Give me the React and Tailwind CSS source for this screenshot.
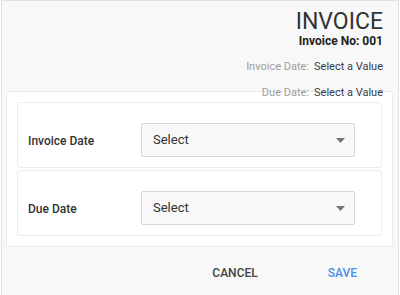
import React from "react";

function Arrow() {
  return (
    <svg width="9" height="5" viewBox="0 0 9 5" className="block">
      <polygon points="0,0 9,0 4.5,5" fill="#757575" />
    </svg>
  );
}

function Row({ label }) {
  return (
    <div className="flex items-start h-[66px] border border-[#ececec] rounded-[3px] bg-white pt-[20px] pl-[10px]">
      <div className="w-[113px] h-[34px] pt-[2px] flex items-center text-[12px] font-medium text-[#333333] leading-[14px]">
        {label}
      </div>
      <div className="w-[214px] h-[34px] flex items-center justify-between border border-[#d6d6d6] rounded-[2px] bg-[#f8f8f8] pl-[11px] pr-[9px]">
        <span className="text-[13px] text-[#333333] leading-[16px]">Select</span>
        <Arrow />
      </div>
    </div>
  );
}

export default function App() {
  return (
    <div className="w-[400px] h-[295px] bg-white overflow-hidden" style={{ fontFamily: "Roboto, 'Liberation Sans', sans-serif" }}>
      <div className="ml-[1px] w-[398px] h-[295px] bg-[#f8f8f8] border-x border-t border-[#e2e2e2] flex flex-col">
        <div className="relative z-10 flex flex-col items-end pt-[8px] pr-[15px]">
          <div className="text-[23px] leading-[25px] text-[#333333]">INVOICE</div>
          <div className="text-[12px] leading-[14px] font-bold text-[#222222]">Invoice No: 001</div>
          <div className="mt-[12px] flex gap-[5px] text-[11px] leading-[14px]">
            <span className="text-[#9e9e9e]">Invoice Date:</span>
            <span className="text-[#3a3a4a]">Select a Value</span>
          </div>
          <div className="mt-[12px] flex gap-[5px] text-[11px] leading-[14px]">
            <span className="text-[#9e9e9e]">Due Date:</span>
            <span className="text-[#3a3a4a]">Select a Value</span>
          </div>
        </div>
        <div className="-mt-[9px] ml-[4px] w-[387px] bg-white border border-[#ebebeb] rounded-[3px] p-[10px] flex flex-col gap-[2px]">
          <Row label="Invoice Date" />
          <Row label="Due Date" />
        </div>
        <div className="mt-[19px] flex justify-end gap-[70px] pr-[41px] text-[12px] leading-[14px] font-medium">
          <span className="text-[#424242]">CANCEL</span>
          <span className="text-[#4a8fe7]">SAVE</span>
        </div>
      </div>
    </div>
  );
}
